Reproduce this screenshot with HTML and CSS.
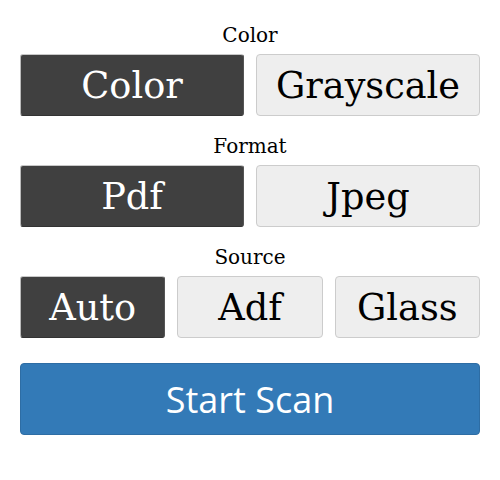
FILE: index.html
```html
<!DOCTYPE html>
<html>
<head>
<meta charset="utf-8">
<link rel="stylesheet" href="styles.css">
</head>
<body>
<div class="panel">
  <section class="group">
    <div class="label">Color</div>
    <div class="row two">
      <button class="opt active">Color</button>
      <button class="opt">Grayscale</button>
    </div>
  </section>
  <section class="group">
    <div class="label">Format</div>
    <div class="row two">
      <button class="opt active">Pdf</button>
      <button class="opt">Jpeg</button>
    </div>
  </section>
  <section class="group">
    <div class="label">Source</div>
    <div class="row three">
      <button class="opt active">Auto</button>
      <button class="opt">Adf</button>
      <button class="opt">Glass</button>
    </div>
  </section>
  <button class="start">Start Scan</button>
</div>
</body>
</html>
```
FILE: styles.css
```css
html, body {
  margin: 0;
  padding: 0;
  background: #fff;
}
.panel {
  padding: 24px 20px 0 20px;
  display: flex;
  flex-direction: column;
  font-family: "DejaVu Serif", serif;
}
.group {
  display: flex;
  flex-direction: column;
  margin-bottom: 19px;
}
.label {
  font-size: 20px;
  line-height: 22px;
  text-align: center;
  color: #000;
  margin-bottom: 8px;
}
.row {
  display: grid;
  gap: 12px;
}
.row.two { grid-template-columns: 1fr 1fr; }
.row.three { grid-template-columns: 1fr 1fr 1fr; }
.opt {
  box-sizing: border-box;
  height: 62px;
  margin: 0;
  padding: 0;
  font-family: "DejaVu Serif", serif;
  font-size: 36.7px;
  color: #000;
  background: #eeeeee;
  border: 1px solid #cccccc;
  border-radius: 4px;
  display: flex;
  align-items: center;
  justify-content: center;
}
.opt.active {
  background: #404040;
  color: #fff;
  border-color: #c8c8c8 #555 #333 #bbb;
  border-radius: 3px;
}
.start {
  box-sizing: border-box;
  margin: 6px 0 0 0;
  height: 72px;
  width: 100%;
  font-family: "Open Sans", sans-serif;
  font-size: 36px;
  color: #fff;
  background: #337ab7;
  border: 1px solid #2e6da4;
  border-radius: 4px;
  padding: 0;
}
```
